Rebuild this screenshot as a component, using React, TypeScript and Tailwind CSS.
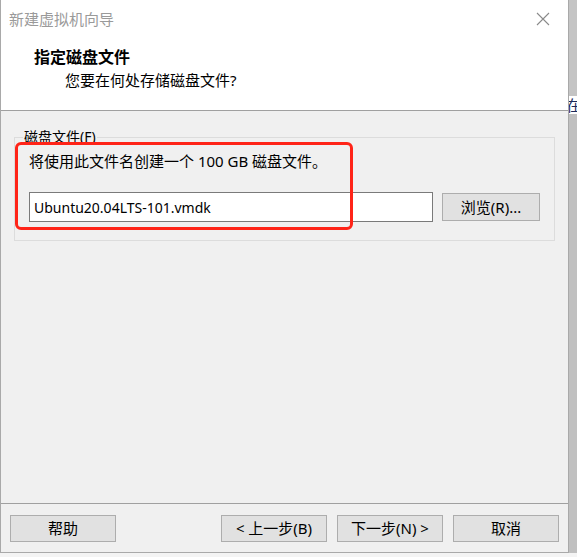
import React from 'react'

const font = { fontFamily: '"Noto Sans", "Noto Sans CJK SC", sans-serif' }

function Btn({ children, className = '' }: { children: React.ReactNode; className?: string }) {
  return (
    <button className={`h-[27px] w-[106px] border border-[#adadad] bg-[#e1e1e1] text-[15px] text-black leading-none ${className}`}>
      {children}
    </button>
  )
}

export default function App() {
  return (
    <div className="w-[577px] h-[557px] bg-white overflow-hidden relative" style={font}>
      <div className="flex h-[553px]">
        {/* dialog window */}
        <div className="w-[571px] h-full flex flex-col border-l border-r border-b border-[#a9a9a9] bg-white">
          {/* title bar */}
          <div className="h-[38px] flex items-center justify-between pl-[8px] pr-[18px]">
            <span className="text-[15px] text-[#9a9a9a]">新建虚拟机向导</span>
            <svg width="14" height="14" viewBox="0 0 14 14" className="text-[#8a8a8a]">
              <path d="M1 1 L13 13 M13 1 L1 13" stroke="currentColor" strokeWidth="1.1" />
            </svg>
          </div>

          {/* header */}
          <div className="h-[73px] border-b border-[#a0a0a0] pl-[33px] pt-[8px]">
            <div className="text-[16px] font-bold text-black leading-[22px]">指定磁盘文件</div>
            <div className="text-[15px] text-black leading-[22px] pl-[31px] mt-[1px]">您要在何处存储磁盘文件?</div>
          </div>

          {/* body */}
          <div className="flex-1 bg-[#f0f0f0] px-[13px] pt-[17px] relative">
            <fieldset className="border border-[#dcdcdc] h-[113px] px-[14px]">
              <legend className="-ml-[6px] px-[1px] text-[14px] text-black leading-[18px]">磁盘文件(F)</legend>
              <div className="text-[15px] text-black leading-[20px] mt-[5px]">将使用此文件名创建一个 100 GB 磁盘文件。</div>
              <div className="flex items-center mt-[21px]">
                <div className="w-[404px] h-[30px] bg-white border border-[#7a7a7a] flex items-center pl-[4px] text-[14px] text-black">
                  Ubuntu20.04LTS-101.vmdk
                </div>
                <button className="ml-[9px] h-[28px] w-[98px] border border-[#adadad] bg-[#e1e1e1] text-[15px] text-black">
                  浏览(R)...
                </button>
              </div>
            </fieldset>
            {/* annotation */}
            <div className="absolute left-[14px] top-[31px] w-[338px] h-[88px] border-[3px] border-[#ff2418] rounded-[6px] pointer-events-none" />
          </div>

          {/* footer */}
          <div className="h-[49px] bg-[#f0f0f0] border-t border-[#a0a0a0] flex items-start pt-[11px] px-[9px]">
            <Btn>帮助</Btn>
            <div className="flex-1" />
            <Btn>&lt; 上一步(B)</Btn>
            <Btn className="ml-[10px]">下一步(N) &gt;</Btn>
            <Btn className="ml-[10px]">取消</Btn>
          </div>
        </div>

        {/* what lies behind the dialog */}
        <div className="flex-1 bg-[#bdbdbd] flex flex-col">
          <div className="h-[96px] bg-[#c4c4c4]" />
          <div className="h-[18px] bg-white overflow-hidden text-[15px] leading-[18px] text-[#1a2a5a] -indent-[3px]">在</div>
          <div className="flex-1 bg-[#c0c0c0]" />
        </div>
      </div>
      <div className="h-[4px] bg-[#f4f4f4]" />
    </div>
  )
}
